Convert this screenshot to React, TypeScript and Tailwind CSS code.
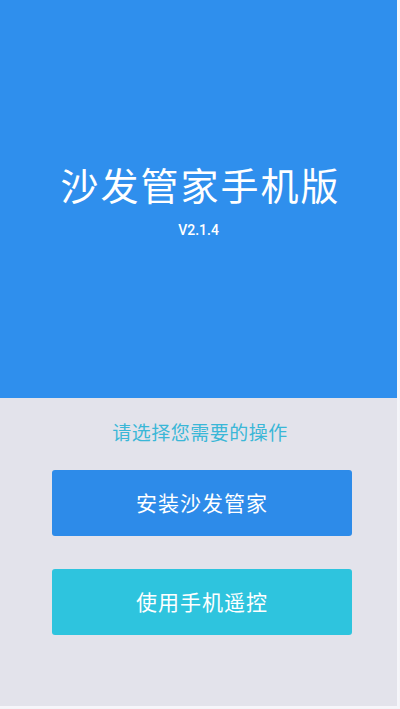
export default function App() {
  return (
    <div
      className="w-[400px] h-[709px] flex flex-col bg-[#f4f4f8] overflow-hidden"
      style={{ fontFamily: '"Noto Sans CJK SC", "Liberation Sans", sans-serif' }}
    >
      <div className="flex flex-col flex-1 border-r-2 border-b-2 border-[#f6f6fa] mr-[1px] mb-[1px]">
        <div className="h-[398px] bg-[#2f8fed] flex flex-col items-center pt-[158px]">
          <h1 className="text-[38px] leading-[52px] text-white tracking-[2px] ml-[4px]">沙发管家手机版</h1>
          <p
            className="mt-[11px] text-[14px] leading-[18px] text-white font-medium"
            style={{ fontFamily: 'Roboto, "Liberation Sans", sans-serif' }}
          >
            V2.1.4
          </p>
        </div>
        <div className="flex-1 bg-[#e3e3eb] flex flex-col">
          <p className="mt-[21px] text-[19px] leading-[26px] text-[#3ab7d7] text-center ml-[3px] tracking-[0.5px]">
            请选择您需要的操作
          </p>
          <button className="mt-[25px] ml-[52px] w-[300px] h-[66px] rounded-[3px] bg-[#2d8be9] text-white text-[21px] tracking-[1px]">
            安装沙发管家
          </button>
          <button className="mt-[33px] ml-[52px] w-[300px] h-[66px] rounded-[3px] bg-[#2ec4de] text-white text-[21px] tracking-[1px]">
            使用手机遥控
          </button>
        </div>
      </div>
    </div>
  );
}
